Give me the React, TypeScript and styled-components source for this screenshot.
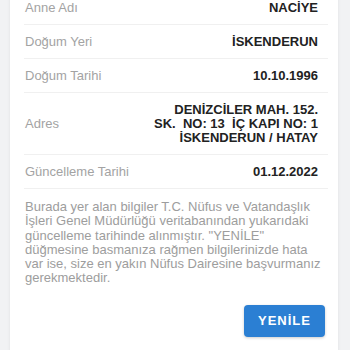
import styled, { createGlobalStyle } from 'styled-components';

const GlobalStyle = createGlobalStyle`
  html, body {
    margin: 0;
    padding: 0;
    background: #f1f2f4;
    font-family: "Liberation Sans", Arial, sans-serif;
  }
`;

const Page = styled.div`
  padding: 0 12px 0 10px;
  height: 350px;
  overflow: hidden;
`;

const Card = styled.div`
  margin-top: -9px;
  background: #ffffff;
  box-shadow: 0 0 3px rgba(0, 0, 0, 0.08);
  padding: 0 10px 30px 14px;
`;

const Row = styled.div`
  display: flex;
  justify-content: space-between;
  align-items: center;
  padding: 9.5px 10px 9.5px 1px;
  border-bottom: 1px solid #f0f0f0;
  font-size: 13px;
  line-height: 14px;
`;

const Label = styled.span`
  color: #a3a3a3;
`;

const Value = styled.span`
  color: #222222;
  font-weight: bold;
  text-align: right;
  white-space: pre-wrap;
`;

const Note = styled.p`
  margin: 11px 4px 0 1px;
  color: #9d9d9d;
  font-size: 13px;
  line-height: 14.3px;
`;

const Footer = styled.div`
  display: flex;
  justify-content: flex-end;
  padding: 19px 3px 0 0;
`;

const Button = styled.button`
  width: 81px;
  height: 32px;
  border: none;
  border-radius: 4px;
  background: #2b7fd3;
  color: #ffffff;
  font-family: "Liberation Sans", Arial, sans-serif;
  font-size: 13px;
  font-weight: bold;
  letter-spacing: 1px;
  box-shadow: 0 1px 3px rgba(0, 0, 0, 0.2);
  cursor: pointer;
`;

const rows = [
  { label: 'Anne Adı', value: 'NACİYE' },
  { label: 'Doğum Yeri', value: 'İSKENDERUN' },
  { label: 'Doğum Tarihi', value: '10.10.1996' },
  { label: 'Adres', value: 'DENİZCİLER MAH. 152.\nSK.  NO: 13  İÇ KAPI NO: 1\nİSKENDERUN / HATAY' },
  { label: 'Güncelleme Tarihi', value: '01.12.2022' },
];

export default function App() {
  return (
    <Page>
      <GlobalStyle />
      <Card>
        {rows.map((r) => (
          <Row key={r.label}>
            <Label>{r.label}</Label>
            <Value>{r.value}</Value>
          </Row>
        ))}
        <Note>
          Burada yer alan bilgiler T.C. Nüfus ve Vatandaşlık İşleri Genel Müdürlüğü veritabanından
          yukarıdaki güncelleme tarihinde alınmıştır. "YENİLE" düğmesine basmanıza rağmen
          bilgilerinizde hata var ise, size en yakın Nüfus Dairesine başvurmanız gerekmektedir.
        </Note>
        <Footer>
          <Button>YENİLE</Button>
        </Footer>
      </Card>
    </Page>
  );
}
